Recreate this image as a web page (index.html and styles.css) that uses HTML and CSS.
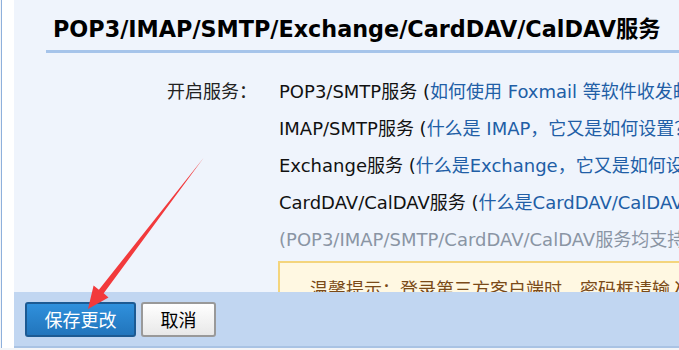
FILE: index.html
```html
<!DOCTYPE html>
<html lang="zh-CN">
<head>
	<meta charset="UTF-8">
	<title>账户设置</title>
	<link rel="stylesheet" href="styles.css">
</head>
<body>
	<div class="page">
		<div class="panel">
			<div class="main">
				<h2 class="title">POP3/IMAP/SMTP/Exchange/CardDAV/CalDAV服务</h2>
				<div class="form">
					<div class="label">开启服务：</div>
					<div class="rows">
						<div class="row">POP3/SMTP服务 (<a href="#">如何使用 Foxmail 等软件收发邮件？</a>)</div>
						<div class="row">IMAP/SMTP服务 (<a href="#">什么是 IMAP，它又是如何设置？</a>)</div>
						<div class="row">Exchange服务 (<a href="#">什么是Exchange，它又是如何设置？</a>)</div>
						<div class="row">CardDAV/CalDAV服务 (<a href="#">什么是CardDAV/CalDAV，它又是如何设置？</a>)</div>
						<div class="row grey">(POP3/IMAP/SMTP/CardDAV/CalDAV服务均支持SSL连接)</div>
						<div class="tip">温馨提示：登录第三方客户端时，密码框请输入“授权码”进行验证。</div>
					</div>
				</div>
			</div>
			<div class="bar">
				<button class="btn btn-save">保存更改</button>
				<button class="btn btn-cancel">取消</button>
			</div>
		</div>
	</div>
	<svg class="arrow" width="679" height="350" viewBox="0 0 679 350">
		<polygon points="203.5,158 103.7,293.3 108.5,297.5 88,309 93.6,285.5 98.9,289.7" fill="#f23a3c"/>
	</svg>
</body>
</html>
```

FILE: styles.css
```css
*{
	margin: 0;
	padding: 0;
	box-sizing: border-box;
}
html,body{
	height: 100%;
	overflow: hidden;
}
body{
	font-family: "DejaVu Sans", "Noto Sans CJK SC", sans-serif;
	background: #f3f5f8;
	position: relative;
}
.page{
	height: 348px;
	margin-left: 1px;
	border-left: 1px solid #8eb0dc;
	padding-left: 12px;
	background: #fff;
}
.panel{
	height: 100%;
	background: #eff4fc;
	display: flex;
	flex-direction: column;
	overflow: hidden;
	border-bottom: 2px solid #a9c3e4;
}
.main{
	flex: 1;
	overflow: hidden;
	min-height: 0;
}
.title{
	margin-left: 32px;
	padding: 16px 0 8px 7px;
	border-bottom: 3px solid #a6c4ea;
	font-size: 22.3px;
	font-weight: bold;
	color: #000;
	white-space: nowrap;
	line-height: 26px;
}
.form{
	display: flex;
	gap: 22px;
	margin-top: 20px;
	white-space: nowrap;
}
.label{
	width: 243px;
	flex-shrink: 0;
	text-align: right;
	font-size: 18px;
	line-height: 37px;
	color: #222;
}
.rows{
	font-size: 18px;
	color: #111;
}
.row{
	line-height: 37px;
}
.row a{
	color: #215ea6;
	text-decoration: none;
}
.grey{
	color: #8a95a4;
}
.tip{
	margin-top: 3px;
	margin-left: -1px;
	border: 2px solid #f4d57d;
	background: #fff8e2;
	color: #7a4a18;
	padding: 12px 30px;
	font-size: 18px;
	width: 700px;
}
.bar{
	height: 54px;
	flex-shrink: 0;
	background: #c1d6f1;
	display: flex;
	align-items: center;
	gap: 5px;
	padding-left: 11px;
}
.btn{
	height: 35px;
	font-family: "DejaVu Sans", "Noto Sans CJK SC", sans-serif;
	font-size: 18px;
	border-radius: 3px;
	cursor: pointer;
}
.btn-save{
	width: 111px;
	color: #fff;
	border: 2px solid #1c5a93;
	background: linear-gradient(#2f90dc, #2275bc);
}
.btn-cancel{
	width: 75px;
	color: #000;
	border: 2px solid #999;
	background: linear-gradient(#fff, #e8e8e8);
}
.arrow{
	position: absolute;
	left: 0;
	top: 0;
	pointer-events: none;
}
```
